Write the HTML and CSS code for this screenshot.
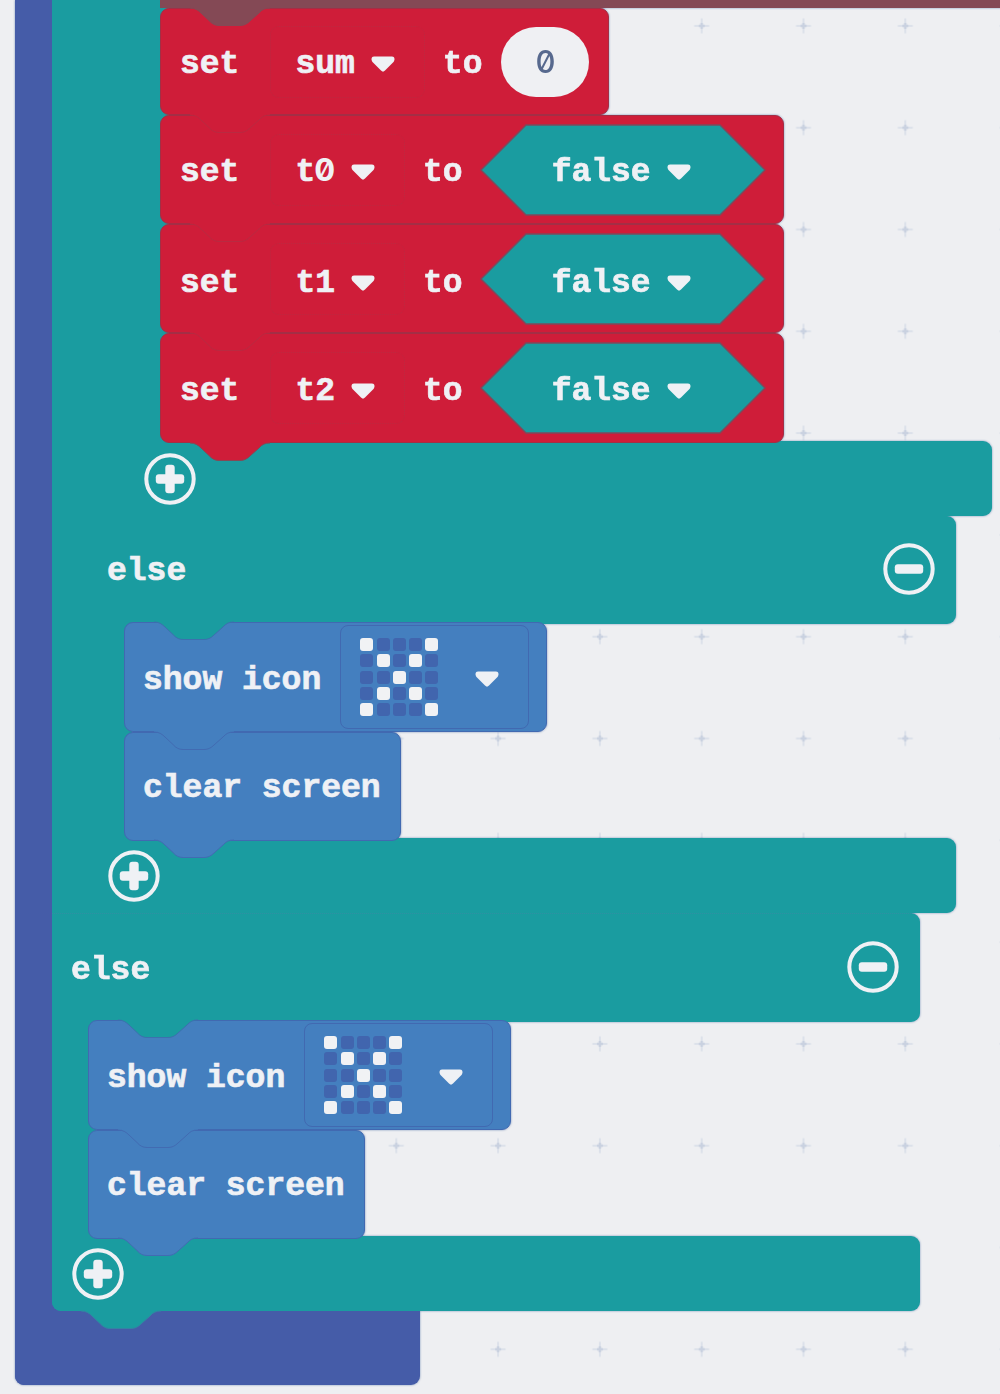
FILE: index.html
```html
<!DOCTYPE html>
<html lang="en">
<head>
<meta charset="utf-8">
<title>Blocks workspace</title>
<link rel="stylesheet" href="styles.css">
</head>
<body>
<svg class="defs" width="0" height="0" aria-hidden="true">
  <symbol id="notch" viewBox="0 0 80 20">
    <path class="notch-fill" d="M0 0V1C5 1 8 3 11 6L19 13.500C22 17 25 18.500 29 18.500H50C54 18.500 57 17 60 14L69 6C72 2.500 75 1 80 1V0Z"/>
    <path class="notch-line" d="M0 1C5 1 8 3 11 6L19 13.500C22 17 25 18.500 29 18.500H50C54 18.500 57 17 60 14L69 6C72 2.500 75 1 80 1"/>
  </symbol>
  <symbol id="caret" viewBox="0 0 24 16">
    <path fill="currentColor" d="M3 .5H21C24 .5 24 4 22.500 6L14 14.500C12.500 16 11.500 16 10 14.500L1.500 6C0 4 0 .5 3 .5Z"/>
  </symbol>
  <symbol id="plus" viewBox="0 0 52 52">
    <circle cx="26" cy="26" r="23.700" fill="none" stroke="currentColor" stroke-width="4"/>
    <rect x="11.800" y="21.300" width="28.400" height="9.400" rx="3" fill="currentColor"/>
    <rect x="21.300" y="11.800" width="9.400" height="28.400" rx="3" fill="currentColor"/>
  </symbol>
  <symbol id="minus" viewBox="0 0 52 52">
    <circle cx="26" cy="26" r="23.700" fill="none" stroke="currentColor" stroke-width="4"/>
    <rect x="11.800" y="21.300" width="28.400" height="9.400" rx="3" fill="currentColor"/>
  </symbol>
</svg>

<main class="workspace">
  <svg class="grid" aria-hidden="true">
    <pattern id="cross" x="40" y="-25" width="101.800" height="101.800" patternUnits="userSpaceOnUse">
      <path d="M50.900 43.500V58.500M43.400 51H58.400" stroke="#dce1ea" stroke-width="2"/>
      <path d="M50.900 48V54M48 51H54" stroke="#c9d1e0" stroke-width="2.500"/>
    </pattern>
    <rect width="100%" height="100%" fill="url(#cross)"/>
  </svg>

  <div class="cblock event">
    <div class="spine"></div>
    <div class="mouth">

      <div class="cblock logic outer">
        <div class="spine"></div>
        <div class="mouth">

          <div class="cblock logic middle">
            <div class="spine"></div>
            <div class="mouth">

              <div class="cblock logic inner">
                <div class="spine"></div>
                <div class="mouth">
                  <div class="strip"></div>
                  <div class="block var sum">
                    <svg class="notch from-strip"><use href="#notch"/></svg>
                    <span>set</span>
                    <span class="field">sum<svg class="caret"><use href="#caret"/></svg></span>
                    <span>to</span>
                    <span class="number"><span class="zero">0</span></span>
                  </div>
                  <div class="block var">
                    <svg class="notch from-var"><use href="#notch"/></svg>
                    <span>set</span>
                    <span class="field"><span>t<span class="zero">0</span></span><svg class="caret"><use href="#caret"/></svg></span>
                    <span>to</span>
                    <span class="bool"><svg class="hex" viewBox="0 0 286 92"><path d="M1 46L46 1H240L285 46L240 91H46Z"/></svg><span>false</span><svg class="caret"><use href="#caret"/></svg></span>
                  </div>
                  <div class="block var low">
                    <svg class="notch from-var"><use href="#notch"/></svg>
                    <span>set</span>
                    <span class="field">t1<svg class="caret"><use href="#caret"/></svg></span>
                    <span>to</span>
                    <span class="bool"><svg class="hex" viewBox="0 0 286 92"><path d="M1 46L46 1H240L285 46L240 91H46Z"/></svg><span>false</span><svg class="caret"><use href="#caret"/></svg></span>
                  </div>
                  <div class="block var last">
                    <svg class="notch from-var"><use href="#notch"/></svg>
                    <span>set</span>
                    <span class="field">t2<svg class="caret"><use href="#caret"/></svg></span>
                    <span>to</span>
                    <span class="bool"><svg class="hex" viewBox="0 0 286 92"><path d="M1 46L46 1H240L285 46L240 91H46Z"/></svg><span>false</span><svg class="caret"><use href="#caret"/></svg></span>
                  </div>
                </div>
                <div class="bar foot">
                  <svg class="notch under var-nub"><use href="#notch"/></svg>
                  <svg class="round"><use href="#plus"/></svg>
                </div>
              </div>

            </div>
            <div class="bar else"><span>else</span><svg class="round"><use href="#minus"/></svg></div>
            <div class="mouth">
              <div class="block basic show">
                <svg class="notch from-logic"><use href="#notch"/></svg>
                <span>show icon</span>
                <span class="picker">
                  <span class="leds"><i class="on"></i><i></i><i></i><i></i><i class="on"></i><i></i><i class="on"></i><i></i><i class="on"></i><i></i><i></i><i></i><i class="on"></i><i></i><i></i><i></i><i class="on"></i><i></i><i class="on"></i><i></i><i class="on"></i><i></i><i></i><i></i><i class="on"></i></span>
                  <svg class="caret"><use href="#caret"/></svg>
                </span>
              </div>
              <div class="block basic clear">
                <svg class="notch from-basic"><use href="#notch"/></svg>
                <span>clear screen</span>
              </div>
            </div>
            <div class="bar foot">
              <svg class="notch under basic-nub"><use href="#notch"/></svg>
              <svg class="round"><use href="#plus"/></svg>
            </div>
          </div>

        </div>
        <div class="bar else seam"><span>else</span><svg class="round"><use href="#minus"/></svg></div>
        <div class="mouth">
          <div class="block basic show">
            <svg class="notch from-logic"><use href="#notch"/></svg>
            <span>show icon</span>
            <span class="picker">
              <span class="leds"><i class="on"></i><i></i><i></i><i></i><i class="on"></i><i></i><i class="on"></i><i></i><i class="on"></i><i></i><i></i><i></i><i class="on"></i><i></i><i></i><i></i><i class="on"></i><i></i><i class="on"></i><i></i><i class="on"></i><i></i><i></i><i></i><i class="on"></i></span>
              <svg class="caret"><use href="#caret"/></svg>
            </span>
          </div>
          <div class="block basic clear">
            <svg class="notch from-basic"><use href="#notch"/></svg>
            <span>clear screen</span>
          </div>
        </div>
        <div class="bar foot">
          <svg class="notch under basic-nub"><use href="#notch"/></svg>
          <svg class="round"><use href="#plus"/></svg>
        </div>
      </div>

    </div>
    <div class="bar foot"><svg class="notch under logic-nub"><use href="#notch"/></svg></div>
  </div>
</main>
</body>
</html>
```

FILE: styles.css
```css
* { box-sizing: border-box; }

body {
  margin: 0;
  background: #eeeff2;
  color: #eff1f5;
  font: bold 33px/40px "Liberation Mono", "DejaVu Sans Mono", monospace;
  -webkit-text-stroke: .7px currentColor;
}

.defs { position: absolute; }

.workspace {
  position: relative;
  width: 1000px;
  height: 1394px;
  overflow: hidden;
}

.grid {
  position: absolute;
  inset: 0;
  width: 100%;
  height: 100%;
}

/* C-shaped blocks: a spine on the left, mouths and full-width bars */
.cblock {
  display: grid;
  grid-template-columns: 36px 1fr;
}

.cblock > :nth-child(2) { grid-row: 1; }
.cblock > :nth-child(3) { grid-row: 2; }
.cblock > :nth-child(4) { grid-row: 3; }
.cblock > :nth-child(5) { grid-row: 4; }

.spine {
  grid-column: 1;
  grid-row: 1 / -1;
  margin-right: -8px;
  background: var(--fill);
}

.mouth {
  grid-column: 2;
  position: relative;
  z-index: 1;
}

.bar {
  grid-column: 1 / -1;
  position: relative;
  display: flex;
  align-items: center;
  width: var(--width);
  background: var(--fill);
  border-radius: 0 9px 9px 0;
}

.event {
  --fill: #455ca8;
  --width: 405px;
  position: relative;
  width: 1000px;
  margin-left: 15px;
  grid-template-columns: 37px 1fr;
  grid-template-rows: 1311px 74px;
  filter: drop-shadow(0 0 1px #8298bd);
}

.event > .spine { border-radius: 0 0 0 9px; }
.event > .bar { border-radius: 0 0 9px 9px; }

.logic { --fill: #1a9ca0; }

.outer {
  --width: 867.5px;
  grid-template-rows: 913px 109px 214px 75px;
}

.outer > .spine,
.outer > .foot { border-bottom-left-radius: 9px; }

.middle {
  --width: 867.5px;
  grid-template-rows: 516px 108px 214px 75px;
}

.inner {
  --width: 867.5px;
  grid-template-rows: 441px 75px;
}

.else {
  justify-content: space-between;
  padding: 0 21px 3px 19px;
}

.else span { padding-top: 7px; }

.seam { border-top: 1px dotted #308fa3; }
.seam span { padding-top: 9px; }

.foot { padding-left: 20px; }

.round {
  width: 52px;
  height: 52px;
}

.strip {
  height: 8px;
  background: #844955;
}

/* Statement blocks */
.block {
  position: relative;
  display: flex;
  align-items: center;
  height: 109px;
  border: 1px solid var(--edge);
  border-radius: 9px;
  background: var(--fill);
}

.block > span:not([class]) {
  padding-top: 7px;
  white-space: pre;
}

.var {
  --fill: #cf1d39;
  --edge: #a42e45;
  width: 624px;
  padding-left: 19px;
}

.sum {
  width: 449px;
  height: 107px;
}

.low > span:not([class]) { padding-top: 10px; }

.last { height: 110px; }

.basic {
  --fill: #447fbf;
  --edge: #4169b1;
  padding-left: 18px;
}

.mouth > .show { margin-top: -2px; width: 423px; height: 110px; }
.clear { width: 277px; }
.block.clear > span { padding-top: 5px; }

.notch {
  position: absolute;
  top: -2px;
  left: 29px;
  width: 80px;
  height: 20px;
}

.notch-fill { fill: currentColor; }
.notch-line { fill: none; stroke: var(--line); stroke-width: 1; }

.from-strip { color: #844955; --line: #844955; }
.from-var { color: #cf1d39; --line: #b92a41; }
.from-basic, .basic-nub { color: #447fbf; --line: #426bb2; }
.from-logic { color: #1a9ca0; --line: #3c70ae; }
.var-nub { color: #cf1d39; --line: #844955; }
.logic-nub { color: #1a9ca0; --line: #3483a4; }

.under {
  top: 1px;
  left: 66px;
  z-index: 2;
}

.logic-nub { top: -1px; }

.caret {
  flex: none;
  width: 24px;
  height: 16px;
}

.field {
  display: flex;
  align-items: center;
  height: 72px;
  margin: 0 17px 0 31px;
  padding: 7px 29px 0 24px;
  border: 1px dotted #bd2940;
  border-radius: 9px;
}

.field .caret { margin: -2px 0 0 16px; }
.field + span { margin-left: 1px; }
.field + span + .bool { margin-left: 17px; }

.low .field { padding-top: 10px; }

/* Slashed zero, set in the width of one monospace cell */
.zero {
  display: inline-block;
  width: 19.800px;
  font-family: Inter, sans-serif;
  font-feature-settings: "zero";
  font-size: 31px;
  line-height: 30px;
  text-align: center;
  text-indent: -1px;
  -webkit-text-stroke: 0;
}

.number {
  width: 88px;
  height: 70px;
  margin-left: 19px;
  padding-top: 18px;
  border-radius: 35px;
  background: #eff0f3;
  color: #57698e;
  text-align: center;
}

.number .zero { font-weight: 500; text-indent: 0; }

.bool {
  position: relative;
  flex: none;
  display: flex;
  align-items: center;
  width: 286px;
  height: 92px;
  padding: 7px 0 0 72px;
}

.low .bool { padding-top: 10px; }

.bool .caret {
  position: relative;
  margin: -2px 0 0 16px;
}

.bool span { position: relative; }

.hex {
  position: absolute;
  top: 0;
  left: 0;
  width: 286px;
  height: 92px;
}

.hex path {
  fill: #1a9ca0;
  stroke: #7c4a5c;
  stroke-width: 1.5;
}

.picker {
  display: flex;
  align-items: center;
  width: 189px;
  height: 104px;
  margin-left: 19px;
  padding-left: 19px;
  border: 1px solid #4169b1;
  border-radius: 8px;
}

.picker .caret { margin: 4px 0 0 37px; }

.leds {
  display: grid;
  grid-template-columns: repeat(5, 13px);
  grid-auto-rows: 13px;
  gap: 3.300px;
}

.leds i {
  border-radius: 3px;
  background: #4165ae;
}

.leds .on { background: #f1f2f4; }
```
